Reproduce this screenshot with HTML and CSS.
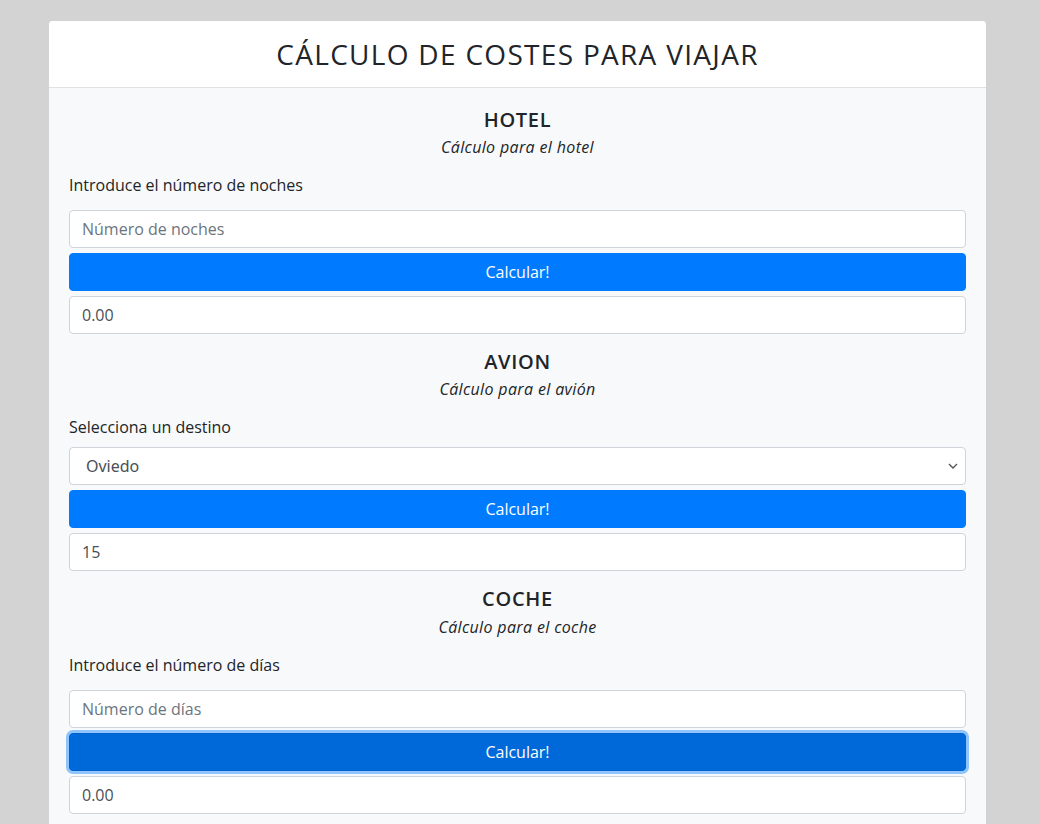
FILE: index.html
```html
<!DOCTYPE html>
<html lang="es">
<head>
<meta charset="utf-8">
<title>Cálculo de costes para viajar</title>
<link rel="stylesheet" href="styles.css">
</head>
<body>
<div class="card">
  <div class="card-header">
    <h1 class="title">CÁLCULO DE COSTES PARA VIAJAR</h1>
  </div>
  <div class="card-body">
    <section class="section">
      <h5 class="sec-title">HOTEL</h5>
      <p class="sec-sub">Cálculo para el hotel</p>
      <label class="label">Introduce el número de noches</label>
      <input class="control" type="text" placeholder="Número de noches">
      <button class="btn">Calcular!</button>
      <div class="control output">0.00</div>
    </section>
    <section class="section">
      <h5 class="sec-title">AVION</h5>
      <p class="sec-sub">Cálculo para el avión</p>
      <label class="label label-tight">Selecciona un destino</label>
      <div class="select-wrap">
        <select class="control select">
          <option>Oviedo</option>
        </select>
        <svg class="chev" width="10" height="6" viewBox="0 0 10 6"><path d="M1 1l4 4 4-4" fill="none" stroke="#555" stroke-width="1.4"/></svg>
      </div>
      <button class="btn">Calcular!</button>
      <div class="control output">15</div>
    </section>
    <section class="section">
      <h5 class="sec-title">COCHE</h5>
      <p class="sec-sub sec-sub-low">Cálculo para el coche</p>
      <label class="label">Introduce el número de días</label>
      <input class="control" type="text" placeholder="Número de días">
      <button class="btn btn-focus">Calcular!</button>
      <div class="control output">0.00</div>
    </section>
  </div>
</div>
</body>
</html>
```
FILE: styles.css
```css
* { box-sizing: border-box; }
html, body { height: 100%; }
body {
  margin: 0;
  padding: 21px 0 0 49px;
  background: #d3d3d3;
  font-family: "Open Sans", "Lato", sans-serif;
  color: #212529;
  font-size: 16px;
  overflow: hidden;
}
.card {
  width: 937px;
  background: #f8f9fa;
  border-radius: 4px 4px 0 0;
  overflow: hidden;
}
.card-header {
  background: #fff;
  border-bottom: 1px solid #dfe1e3;
  height: 67px;
  display: flex;
  align-items: center;
  justify-content: center;
}
.title {
  margin: 0;
  font-size: 28px;
  font-weight: 500;
  line-height: 34px;
  letter-spacing: 1.3px;
}
.card-body {
  padding: 20px 20px 0;
}
.section {
  display: flex;
  flex-direction: column;
  margin-bottom: 16px;
}
.sec-title {
  margin: 0;
  text-align: center;
  font-size: 20px;
  font-weight: 600;
  line-height: 24px;
  letter-spacing: 0.7px;
}
.sec-sub {
  margin: 3px 0 0;
  text-align: center;
  font-style: italic;
  line-height: 24px;
  letter-spacing: 0.35px;
}
.sec-sub-low { margin-top: 4px; }
.label {
  margin-top: 14px;
  line-height: 24px;
  margin-bottom: 13px;
}
.label-tight { margin-bottom: 8px; }
.control {
  display: block;
  width: 100%;
  height: 38px;
  padding: 6px 12px;
  border: 1px solid #ced4da;
  border-radius: 4px;
  background: #fff;
  font-family: inherit;
  font-size: 16px;
  line-height: 24px;
  color: #495057;
}
.control::placeholder { color: #6c757d; }
.select-wrap { position: relative; }
.select {
  appearance: none;
  -webkit-appearance: none;
  padding-left: 16px;
  font-family: "Noto Sans", sans-serif;
  color: #495057;
}
.chev {
  position: absolute;
  right: 8px;
  top: 16px;
}
.btn {
  display: block;
  width: 100%;
  height: 38px;
  margin: 5px 0;
  border: 1px solid #007bff;
  border-radius: 4px;
  background: #007bff;
  color: #fff;
  font-family: inherit;
  font-size: 16px;
  line-height: 24px;
  cursor: pointer;
}
.btn-focus {
  background: #0069d9;
  border-color: #0062cc;
  box-shadow: 0 0 0 3px rgba(38, 143, 255, 0.5);
}
```
